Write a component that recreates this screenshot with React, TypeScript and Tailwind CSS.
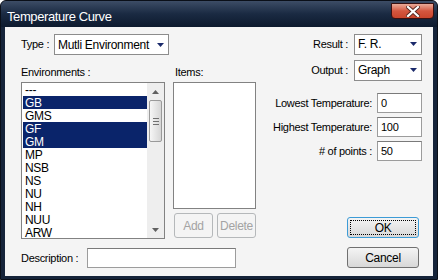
import React from "react";

const font = { fontFamily: '"Liberation Sans", Arial, sans-serif' };

function Arrow() {
  return (
    <svg width="7" height="4" viewBox="0 0 7 4" className="shrink-0">
      <polygon points="0,0 7,0 3.5,4" fill="#1b2a6b" />
    </svg>
  );
}

function Select({ value, w }: { value: string; w: string }) {
  return (
    <div className={`${w} h-[21px] bg-white border border-[#8c8c8c] flex items-center pl-[3px] pr-[4px]`}>
      <span className="flex-1 text-[12px] tracking-[-0.3px] text-black leading-none">{value}</span>
      <Arrow />
    </div>
  );
}

function Input({ value, w }: { value?: string; w: string }) {
  return (
    <div className={`${w} h-[20px] bg-white border border-[#9c9c9c] border-t-[#7a7a7a] flex items-center pl-[3px] text-[11px] tracking-[-0.3px] leading-none`}>
      {value}
    </div>
  );
}

const items = ["---", "GB", "GMS", "GF", "GM", "MP", "NSB", "NS", "NU", "NH", "NUU", "ARW"];
const selected = new Set(["GB", "GF", "GM"]);

export default function App() {
  return (
    <div className="w-[438px] h-[280px] bg-white" style={font}>
      <div className="w-[438px] h-[280px] flex flex-col rounded-t-[6px] bg-[#16243a] border border-[#0a0f18] overflow-hidden">
        {/* title bar */}
        <div className="h-[26px] shrink-0 flex items-start bg-gradient-to-b from-[#3d4d66] via-[#1a2a42] to-[#0d1a2e]">
          <span className="text-white text-[13px] tracking-[-0.4px] leading-none mt-[9px] ml-[6px] flex-1">
            Temperature Curve
          </span>
          <div className="mt-[2px] mr-[3px] w-[43px] h-[16px] rounded-b-[4px] border border-[#3a1010] bg-gradient-to-b from-[#e9aa99] via-[#d4563f] to-[#c9452c] flex items-center justify-center">
            <svg width="14" height="11" viewBox="0 0 14 11">
              <path d="M2 1 L12 10 M12 1 L2 10" stroke="#5a2a22" strokeWidth="4" strokeLinecap="square" />
              <path d="M2 1 L12 10 M12 1 L2 10" stroke="#ffffff" strokeWidth="2.2" strokeLinecap="square" />
            </svg>
          </div>
        </div>
        {/* body */}
        <div className="flex-1 ml-[4px] mr-[4px] mb-[3px] bg-[#f4f4f4] flex text-black text-[11px] tracking-[-0.3px]">
          {/* left part */}
          <div className="flex flex-col pl-[16px] pt-[7px] w-[256px]">
            <div className="flex items-center h-[21px]">
              <span className="w-[33px]">Type :</span>
              <Select value="Mutli Environment" w="w-[115px]" />
            </div>
            <div className="flex mt-[11px] h-[13px] items-center">
              <span className="w-[154px]">Environments :</span>
              <span>Items:</span>
            </div>
            <div className="flex mt-[3px]">
              {/* env list */}
              <div className="w-[144px] h-[157px] border border-[#828282] bg-white flex overflow-hidden">
                <div className="flex-1 flex flex-col pl-[1px] overflow-hidden">
                  {items.map((it) => (
                    <div
                      key={it}
                      className={`h-[13px] shrink-0 flex items-center pl-[2px] text-[12px] leading-none ${
                        selected.has(it) ? "bg-[#0a246a] text-white" : "text-black"
                      }`}
                    >
                      {it}
                    </div>
                  ))}
                </div>
                <div className="w-[17px] bg-[#eeeeee] flex flex-col items-center">
                  <div className="h-[17px] flex items-center justify-center">
                    <svg width="7" height="4" viewBox="0 0 7 4">
                      <polygon points="0,4 7,4 3.5,0" fill="#606060" />
                    </svg>
                  </div>
                  <div className="w-[13px] h-[42px] rounded-[2px] border border-[#9a9a9a] bg-gradient-to-r from-[#f6f6f6] to-[#d6d6d6] flex flex-col items-center justify-center gap-[2px]">
                    <div className="w-[6px] h-[1px] bg-[#707070]" />
                    <div className="w-[6px] h-[1px] bg-[#707070]" />
                    <div className="w-[6px] h-[1px] bg-[#707070]" />
                  </div>
                  <div className="flex-1" />
                  <div className="h-[17px] flex items-center justify-center">
                    <svg width="7" height="4" viewBox="0 0 7 4">
                      <polygon points="0,0 7,0 3.5,4" fill="#606060" />
                    </svg>
                  </div>
                </div>
              </div>
              {/* items column */}
              <div className="ml-[8px] flex flex-col w-[83px]">
                <div className="h-[127px] border border-[#828282] bg-white" />
                <div className="flex mt-[4px] ml-[1px] gap-[4px]">
                  <div className="w-[39px] h-[25px] rounded-[3px] border border-[#b5b8ba] flex items-center justify-center text-[#a3a3a3] text-[12px]">
                    Add
                  </div>
                  <div className="w-[39px] h-[25px] rounded-[3px] border border-[#b5b8ba] flex items-center justify-center text-[#a3a3a3] text-[12px]">
                    Delete
                  </div>
                </div>
              </div>
            </div>
            <div className="flex items-center mt-[9px]">
              <span className="w-[66px]">Description :</span>
              <Input w="w-[149px]" />
            </div>
          </div>
          {/* right part */}
          <div className="flex-1 flex flex-col items-end pr-[11px] pt-[7px]">
            <div className="flex items-center h-[20px] gap-[6px]">
              <span>Result :</span>
              <Select value="F. R." w="w-[68px] h-[20px]" />
            </div>
            <div className="flex items-center h-[20px] gap-[6px] mt-[6px]">
              <span>Output :</span>
              <Select value="Graph" w="w-[68px] h-[20px]" />
            </div>
            <div className="flex items-center gap-[5px] mt-[13px]">
              <span>Lowest Temperature:</span>
              <Input value="0" w="w-[45px]" />
            </div>
            <div className="flex items-center gap-[5px] mt-[4px]">
              <span>Highest Temperature:</span>
              <Input value="100" w="w-[45px]" />
            </div>
            <div className="flex items-center gap-[5px] mt-[4px]">
              <span># of points :</span>
              <Input value="50" w="w-[45px]" />
            </div>
            <div className="mt-[56px] mr-[3px] w-[72px] h-[21px] rounded-[3px] border border-[#3c9bd6] bg-gradient-to-b from-[#f4f4f4] to-[#d8d8d8] p-[2px]">
              <div className="w-full h-full border border-dotted border-black flex items-center justify-center text-[12px]">
                OK
              </div>
            </div>
            <div className="mt-[9px] mr-[3px] w-[72px] h-[21px] rounded-[3px] border border-[#707070] bg-gradient-to-b from-[#f4f4f4] to-[#d8d8d8] flex items-center justify-center text-[12px]">
              Cancel
            </div>
          </div>
        </div>
      </div>
    </div>
  );
}
